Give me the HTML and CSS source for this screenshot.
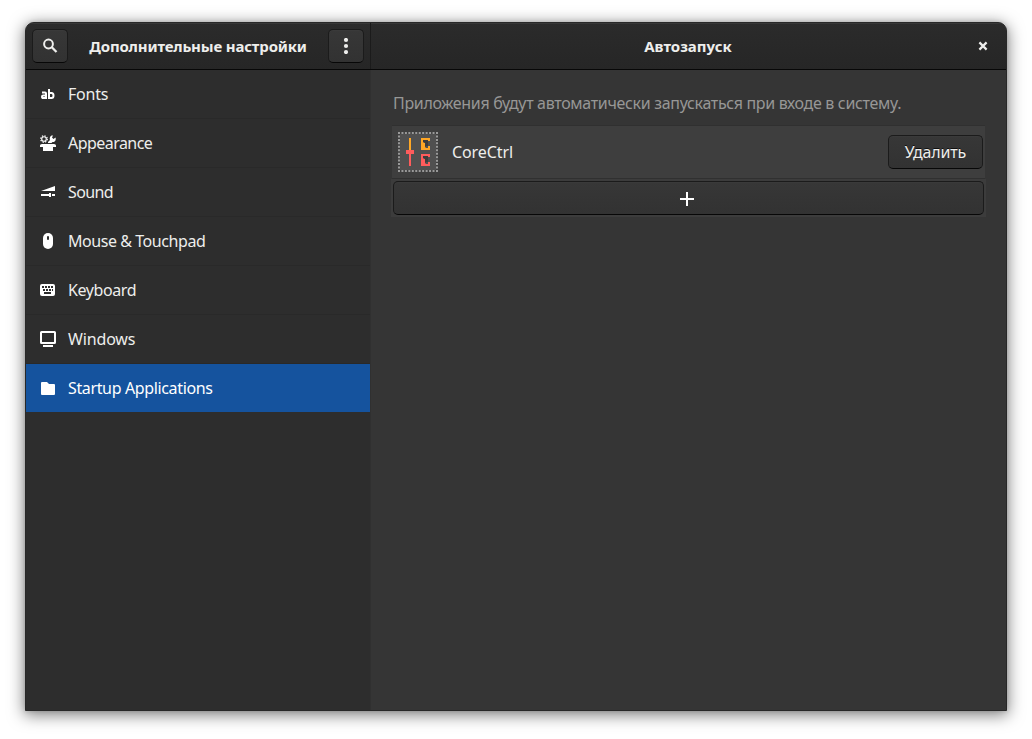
FILE: index.html
```html
<!DOCTYPE html>
<html lang="ru">
<head>
<meta charset="utf-8">
<title>Дополнительные настройки</title>
<link rel="stylesheet" href="styles.css">
</head>
<body>
<main class="window">
  <header class="titlebar">
    <div class="title-left">
      <button class="btn icon-btn" aria-label="Поиск"><svg width="16" height="16" viewBox="0 0 16 16" fill="none" stroke="#eeeeec"><circle cx="6.5" cy="6" r="4.4" stroke-width="2"/><path d="M9.8 9.3l4.7 4.7" stroke-width="2.3"/></svg></button>
      <h1 class="title title-main">Дополнительные настройки</h1>
      <button class="btn icon-btn" aria-label="Меню"><svg width="16" height="16" viewBox="0 0 16 16" fill="#eeeeec"><circle cx="8" cy="2" r="2.1"/><circle cx="8" cy="8" r="2.1"/><circle cx="8" cy="14" r="2.1"/></svg></button>
    </div>
    <div class="title-right">
      <h2 class="title title-page">Автозапуск</h2>
      <svg class="close" width="16" height="16" viewBox="0 0 16 16" fill="none" stroke="#eeeeec" stroke-width="2.2"><path d="M4.4 4.4l7.2 7.2M11.6 4.4l-7.2 7.2"/></svg>
    </div>
  </header>
  <div class="body">
    <nav class="sidebar">
      <div class="item"><svg width="16" height="16" viewBox="0 0 16 16" fill="none" stroke="#fff" stroke-width="2"><path d="M2 6.500h3q1 0 1 1V13M6 9.500H3.200Q2 9.500 2 10.800T3.200 12H6M9 3v10M9 7h2.500q2 0 2 2.500T11.500 12H9"/></svg><span class="t-fonts">Fonts</span></div>
      <div class="item"><svg width="16" height="16" viewBox="0 0 16 16" fill="#fff"><circle cx="4" cy="4" r="2.3" fill="none" stroke="#fff" stroke-width="1.1"/><circle cx="4" cy="4" r="3.300" fill="none" stroke="#fff" stroke-width="1.200" stroke-dasharray="1.3 1.3"/><path d="M8 7l2-2q-1-3 1.500-4.500h1.500L12 2.500 13.500 4l2-1.500q1 3-1.500 4.500h-1.500L11.500 8H8zM0 10.500Q0 9 2 9h12q2 0 2 1.500V12h-3v4H3v-4H0z"/></svg><span class="t-appear">Appearance</span></div>
      <div class="item"><svg width="16" height="16" viewBox="0 0 16 16" fill="#fff"><path d="M1 7l14-5v5zM1 10h8V9h2v4H9v-1H1zM12 10h3v2h-3z"/></svg><span class="t-sound">Sound</span></div>
      <div class="item"><svg width="16" height="16" viewBox="0 0 16 16"><rect x="3" y="0" width="10" height="16" rx="5" fill="#fff"/><rect x="7" y="3" width="2" height="4" rx="1" fill="#2d2d2d"/></svg><span class="t-mouse">Mouse &amp; Touchpad</span></div>
      <div class="item"><svg width="16" height="16" viewBox="0 0 16 16"><rect x="0" y="2" width="15" height="12" rx="2" fill="#fff"/><path d="M2 4h2v2H2zM5 4h2v2H5zM8 4h2v2H8zM11 4h2v2h-2zM3 7h2v2H3zM6 7h2v2H6zM9 7h2v2H9zM12 7h1v2h-1zM4 10h7v2H4z" fill="#2d2d2d"/></svg><span class="t-keyb">Keyboard</span></div>
      <div class="item"><svg width="16" height="16" viewBox="0 0 16 16" fill="none" stroke="#fff" stroke-width="2"><rect x="1" y="1" width="14" height="11" rx=".6"/><path d="M3 15h10"/></svg><span class="t-wind">Windows</span></div>
      <div class="item selected"><svg width="16" height="16" viewBox="0 0 16 16" fill="#fff"><path d="M1 3q0-1 1-1h5l2 2h5q1 0 1 1v9q0 1-1 1H2q-1 0-1-1z"/></svg><span class="t-start">Startup Applications</span></div>
    </nav>
    <section class="content">
      <p class="hint">Приложения будут автоматически запускаться при входе в систему.</p>
      <div class="list">
        <div class="app">
          <svg class="app-icon" width="40" height="40" viewBox="0 0 40 40">
            <rect x="2" y="2" width="36" height="36" fill="#505050"/>
            <rect x="1" y="1" width="38" height="38" fill="none" stroke="#999" stroke-width="2" stroke-dasharray="2 1.455" stroke-dashoffset="1"/>
            <path d="M11 6h2v12h-2z" fill="#ffa726"/>
            <path d="M8 18h8v4h-3v12h-2V22H8z" fill="#ff5c5c"/>
            <path d="M23 6h9v3h-2V8h-5v2l2 1v3l1 2h2v-2h2v4h-9z" fill="#ffa726"/>
            <path d="M23 22h9v3h-2v-1h-5v2l2 1v3l1 2h2v-2h2v4h-9z" fill="#ff5c5c"/>
            <path d="M25 8h5v6h-2v2l-1-2v-3l-2-1z" fill="#3c3c3c"/>
            <path d="M25 24h5v6h-2v2l-1-2v-3l-2-1z" fill="#3c3c3c"/>
          </svg>
          <span class="app-name">CoreCtrl</span>
          <button class="btn remove"><span>Удалить</span></button>
        </div>
        <div class="add-row">
          <button class="btn add" aria-label="Добавить"><svg width="16" height="16" viewBox="0 0 16 16" fill="#fff"><path d="M7 1h2v6h6v2H9v6H7V9H1V7h6z"/></svg></button>
        </div>
      </div>
    </section>
  </div>
</main>
</body>
</html>
```
FILE: styles.css
```css
* { box-sizing: border-box; }
body {
  margin: 0;
  padding: 22px 25px 28px;
  height: 739px;
  overflow: hidden;
  background: #fff;
  font: 16px/24px "Noto Sans", sans-serif;
  color: #eeeeec;
}
.window {
  display: flex;
  flex-direction: column;
  height: 689px;
  border: 1px solid #282828;
  border-radius: 9px 9px 0 0;
  background: #353535;
  overflow: hidden;
  box-shadow: 0 3px 16px 1px rgba(0, 0, 0, .5), 0 0 4px rgba(0, 0, 0, .15);
}
.titlebar {
  display: flex;
  height: 47px;
  flex: none;
  border-bottom: 1px solid #070707;
  background: linear-gradient(#2b2b2b, #262626);
  box-shadow: inset 0 1px #383838;
}
.title-left {
  display: flex;
  align-items: center;
  justify-content: space-between;
  width: 345px;
  padding: 0 6px;
  border-right: 1px solid #1b1b1b;
}
.title-right {
  display: grid;
  grid-template-columns: 31px 1fr 31px;
  align-items: center;
  flex: 1;
}
.title {
  margin: 0;
  padding-bottom: 1px;
  font-size: 15px;
  font-weight: 700;
  text-align: center;
  white-space: nowrap;
}
.title-main { letter-spacing: -.17px; }
.title-page { grid-column: 2; padding-right: 1px; }
.close { justify-self: start; }
.btn {
  display: flex;
  align-items: center;
  justify-content: center;
  height: 34px;
  padding: 0;
  border: 1px solid #1b1b1b;
  border-bottom-color: #070707;
  border-radius: 5px;
  background: linear-gradient(#373737, #323232);
  box-shadow: inset 0 1px rgba(255, 255, 255, .02);
  color: #eeeeec;
  font: inherit;
  text-shadow: 0 -1px rgba(0, 0, 0, .7);
}
.icon-btn { width: 36px; }
.body { display: flex; flex: 1; }
.sidebar {
  width: 345px;
  background: #2d2d2d;
  border-right: 1px solid #303030;
}
.item {
  display: flex;
  align-items: center;
  gap: 12px;
  height: 49px;
  padding-left: 14px;
  border-bottom: 1px solid #292929;
  white-space: nowrap;
}
.t-fonts { letter-spacing: -.2px; }
.t-appear { letter-spacing: -.55px; }
.t-sound { letter-spacing: -.6px; }
.t-mouse { letter-spacing: -.44px; }
.t-keyb { letter-spacing: -.4px; }
.t-wind { letter-spacing: -.15px; }
.t-start { letter-spacing: -.36px; }
.selected {
  height: 48px;
  border: 0;
  background: #15539e;
  color: #fff;
}
.content { flex: 1; padding: 21px 20px 0; }
.hint {
  margin: 0 0 10px 2px;
  color: #979796;
  letter-spacing: -.325px;
  white-space: nowrap;
}
.list { width: 595px; }
.app {
  display: flex;
  align-items: center;
  height: 54px;
  margin-left: 1px;
  margin-right: 1px;
  padding: 0 2px 0 6px;
  border: 1px solid #303030;
  border-width: 1px 0;
  background: #3e3e3e;
}
.app-name { margin-left: 14px; letter-spacing: -.1px; }
.remove { width: 95px; margin-left: auto; letter-spacing: -.15px; }
.add-row { height: 38px; padding: 2px; background: #3c3c3c; }
.add { width: 591px; }
.add svg { position: relative; left: -2px; top: 1px; }
```
